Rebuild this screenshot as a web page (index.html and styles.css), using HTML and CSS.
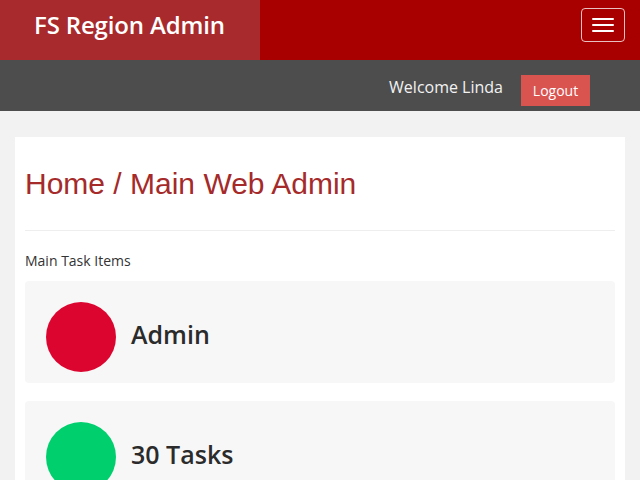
FILE: index.html
```html
<!DOCTYPE html>
<html>
<head>
<meta charset="utf-8">
<link rel="stylesheet" href="styles.css">
</head>
<body>
<header class="navbar">
  <div class="brand">FS Region Admin</div>
  <button class="toggle" aria-label="Menu">
    <span class="bar"></span><span class="bar"></span><span class="bar"></span>
  </button>
</header>
<div class="userbar">
  <span class="welcome">Welcome Linda</span>
  <button class="logout">Logout</button>
</div>
<main class="page">
  <section class="card">
    <h2 class="title">Home / Main Web Admin</h2>
    <hr class="rule">
    <p class="label">Main Task Items</p>
    <div class="item">
      <span class="dot dot-red"></span>
      <span class="item-text">Admin</span>
    </div>
    <div class="item">
      <span class="dot dot-green"></span>
      <span class="item-text">30 Tasks</span>
    </div>
  </section>
</main>
</body>
</html>
```
FILE: styles.css
```css
html, body {
  margin: 0;
  padding: 0;
  background: #f2f2f2;
  font-family: "Open Sans", "Liberation Sans", sans-serif;
  color: #333;
  height: 100%;
  overflow: hidden;
}
.navbar {
  display: flex;
  justify-content: space-between;
  align-items: flex-start;
  height: 60px;
  background: #a80000;
}
.brand {
  width: 226px;
  height: 60px;
  padding-left: 34px;
  background: #a82a2c;
  color: #fff;
  font-size: 24px;
  font-weight: 600;
  line-height: 50px;
  letter-spacing: -0.15px;
}
.toggle {
  margin: 8px 15px 0 0;
  width: 44px;
  height: 34px;
  padding: 9px 10px;
  border: 1px solid rgba(255,255,255,0.75);
  border-radius: 4px;
  background: transparent;
  display: flex;
  flex-direction: column;
  justify-content: space-between;
  box-sizing: border-box;
}
.bar {
  display: block;
  width: 22px;
  height: 2px;
  background: #fff;
  border-radius: 1px;
}
.userbar {
  display: flex;
  justify-content: flex-end;
  align-items: flex-start;
  height: 51px;
  box-sizing: border-box;
  padding: 15px 50px 0 0;
  background: #4d4d4d;
  gap: 18px;
}
.welcome {
  color: #f2f2f2;
  font-size: 16px;
  line-height: 22px;
  margin-top: 1px;
}
.logout {
  height: 31px;
  width: 69px;
  padding: 0;
  border: none;
  background: #d9534f;
  color: #fff;
  font-family: "Open Sans", sans-serif;
  font-size: 14px;
  line-height: 31px;
}
.page {
  padding: 26px 15px 0;
}
.card {
  background: #fff;
  padding: 30px 10px 20px;
  min-height: 400px;
}
.title {
  margin: 0;
  font-family: "Liberation Sans", Arial, sans-serif;
  font-weight: normal;
  font-size: 30px;
  line-height: 33px;
  color: #a52a2a;
}
.rule {
  margin: 30px 0 0;
  border: 0;
  border-top: 1px solid #eee;
}
.label {
  margin: 20px 0 10px;
  font-size: 14px;
  line-height: 20px;
}
.item {
  display: flex;
  align-items: center;
  gap: 15px;
  background: #f7f7f7;
  border-radius: 4px;
  padding: 21px 21px 11px;
  margin-bottom: 18px;
}
.dot {
  width: 70px;
  height: 70px;
  border-radius: 50%;
  flex: none;
}
.dot-red { background: #dc0530; }
.dot-green { background: #00cf6e; }
.item-text {
  font-size: 25px;
  font-weight: 600;
  color: #2b2b2b;
  line-height: 36px;
  margin-bottom: 6px;
}
```
